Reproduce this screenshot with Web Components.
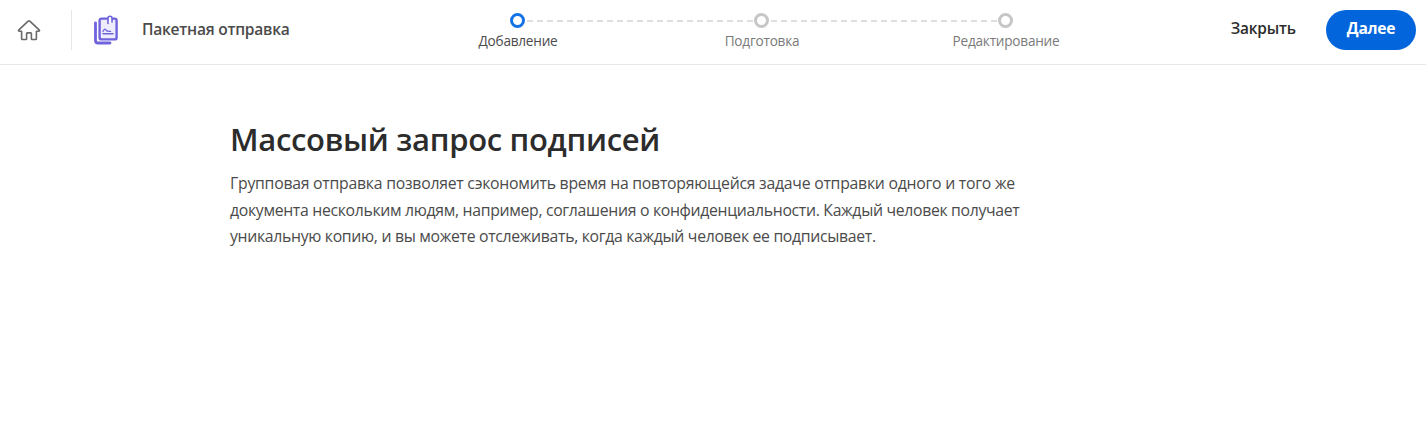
<!DOCTYPE html>
<html lang="ru">
<head>
<meta charset="utf-8">
<title>Пакетная отправка</title>
<style>
html, body { margin: 0; padding: 0; background: #fff; }
body { font-family: "Open Sans", "Noto Sans", sans-serif; }
</style>
</head>
<body>
<send-page>
    <send-header>
        <send-step state="active">Добавление</send-step>
        <send-step>Подготовка</send-step>
        <send-step last>Редактирование</send-step>
    </send-header>
    <send-intro heading="Массовый запрос подписей"><span style="letter-spacing:-.25px">Групповая отправка позволяет сэкономить время на повторяющейся задаче отправки одного и того же</span><br>документа нескольким людям, например, соглашения о конфиденциальности. Каждый человек получает<br>уникальную копию, и вы можете отслеживать, когда каждый человек ее подписывает.</send-intro>
</send-page>
<script>
class SendPage extends HTMLElement {
    connectedCallback() {
        this.shadow = this.attachShadow({mode: 'open'});
        this.shadow.innerHTML = `<style>
:host{display:block;width:100%;height:429px;overflow:hidden;background:#fff;}
</style><slot></slot>`;
    }
}

class SendHeader extends HTMLElement {
    connectedCallback() {
        this.shadow = this.attachShadow({mode: 'open'});
        this.shadow.innerHTML = `<style>
:host{display:grid;grid-template-columns:395px 732px 1fr;height:64px;border-bottom:1px solid #e8e8e8;box-sizing:content-box;}
.left{display:flex;align-items:center;padding-bottom:4px;}
.home{display:flex;margin-left:17px;width:24px;height:24px;}
.sep{width:1px;height:40px;background:#e6e6e6;margin:0 21px 0 30px;}
.logo{display:flex;width:26px;height:30px;}
.title{margin:-2px 0 0 23px;font:600 15.6px "Open Sans",sans-serif;letter-spacing:-.26px;color:#4b4b4b;white-space:nowrap;}
.steps{display:grid;grid-template-columns:repeat(3,244px);}
.right{display:flex;align-items:center;justify-content:flex-end;padding:0 10px 4px 0;}
.close{margin:-4px 30px 0 0;font:600 15.4px "Open Sans",sans-serif;letter-spacing:-.14px;color:#2c2c2c;}
.next{display:flex;align-items:center;justify-content:center;width:90px;height:40px;border-radius:20px;background:#0265dc;color:#fff;font:700 15.6px "Open Sans",sans-serif;letter-spacing:-.3px;padding-bottom:4px;box-sizing:border-box;}
</style>
<div class="left">
    <span class="home"><svg width="24" height="24" viewBox="0 0 24 24" fill="none" stroke="#6a6a6a" stroke-width="1.6" stroke-linejoin="round" stroke-linecap="round"><path d="M1.6 12.2 11.2 3.1a1.2 1.2 0 0 1 1.6 0l9.6 9.1a.6.6 0 0 1-.4 1H19.4v7.6a.7.7 0 0 1-.7.7h-3.6a.7.7 0 0 1-.7-.7v-5.2a.7.7 0 0 0-.7-.7h-3.4a.7.7 0 0 0-.7.7v5.2a.7.7 0 0 1-.7.7H5.3a.7.7 0 0 1-.7-.7v-7.6H2a.6.6 0 0 1-.4-1Z"/></svg></span>
    <span class="sep"></span>
    <span class="logo"><svg width="26" height="30" viewBox="0 0 26 30" fill="none">
        <path d="M2.5 8v17.5A2.5 2.5 0 0 0 5 28h12" stroke="#6f63dd" stroke-width="2.8" stroke-linecap="round"/>
        <rect x="6.6" y="3.6" width="17" height="20.8" rx="2" fill="#eeecfb" stroke="#6f63dd" stroke-width="2.4"/>
        <path d="M15 8.5V3.2a2 2 0 0 1 4 0V7" stroke="#6f63dd" stroke-width="1.6" stroke-linecap="round" fill="#fff"/>
        <path d="M10 16.6c1.2-3 2.4-3.2 3.2-1.2.6 1.2 2.2 1 4.4 1" stroke="#6f63dd" stroke-width="1.3" stroke-linecap="round"/>
        <path d="M10 18.8h10" stroke="#6f63dd" stroke-width="1.4" stroke-linecap="round"/>
    </svg></span>
    <span class="title">Пакетная отправка</span>
</div>
<div class="steps"><slot></slot></div>
<div class="right">
    <span class="close">Закрыть</span>
    <span class="next">Далее</span>
</div>`;
    }
}

class SendStep extends HTMLElement {
    connectedCallback() {
        this.shadow = this.attachShadow({mode: 'open'});
        this.shadow.innerHTML = `<style>
:host{display:flex;flex-direction:column;align-items:center;position:relative;padding-top:13px;color:#7a7a7a;font:400 13.6px/18px "Open Sans",sans-serif;letter-spacing:-.22px;}
:host([state="active"]){color:#4b4b4b;}
.dot{width:15px;height:15px;box-sizing:border-box;border-radius:50%;border:3px solid #c6c6c6;background:#fff;position:relative;z-index:1;}
:host([state="active"]) .dot{border-color:#1473e6;}
.line{position:absolute;left:50%;top:20px;width:244px;height:2px;background:repeating-linear-gradient(90deg,#dedede 0 6px,transparent 6px 10px);}
:host([last]) .line{display:none;}
.label{margin:4px 0 0 2px;white-space:nowrap;}
</style>
<span class="line"></span>
<span class="dot"></span>
<span class="label"><slot></slot></span>`;
    }
}

class SendIntro extends HTMLElement {
    connectedCallback() {
        this.shadow = this.attachShadow({mode: 'open'});
        this.shadow.innerHTML = `<style>
:host{display:block;padding:51px 0 0 230px;}
h1{margin:0;font:600 31px/46px "Open Sans",sans-serif;letter-spacing:-.31px;color:#2c2c2c;}
p{margin:8px 0 0;font:400 15.8px/26.6px "Open Sans",sans-serif;letter-spacing:-.32px;color:#4b4b4b;white-space:nowrap;}
</style>
<h1></h1>
<p><slot></slot></p>`;
        this.shadow.querySelector('h1').textContent = this.getAttribute('heading');
    }
}

window.customElements.define('send-page', SendPage);
window.customElements.define('send-header', SendHeader);
window.customElements.define('send-step', SendStep);
window.customElements.define('send-intro', SendIntro);
</script>
</body>
</html>
